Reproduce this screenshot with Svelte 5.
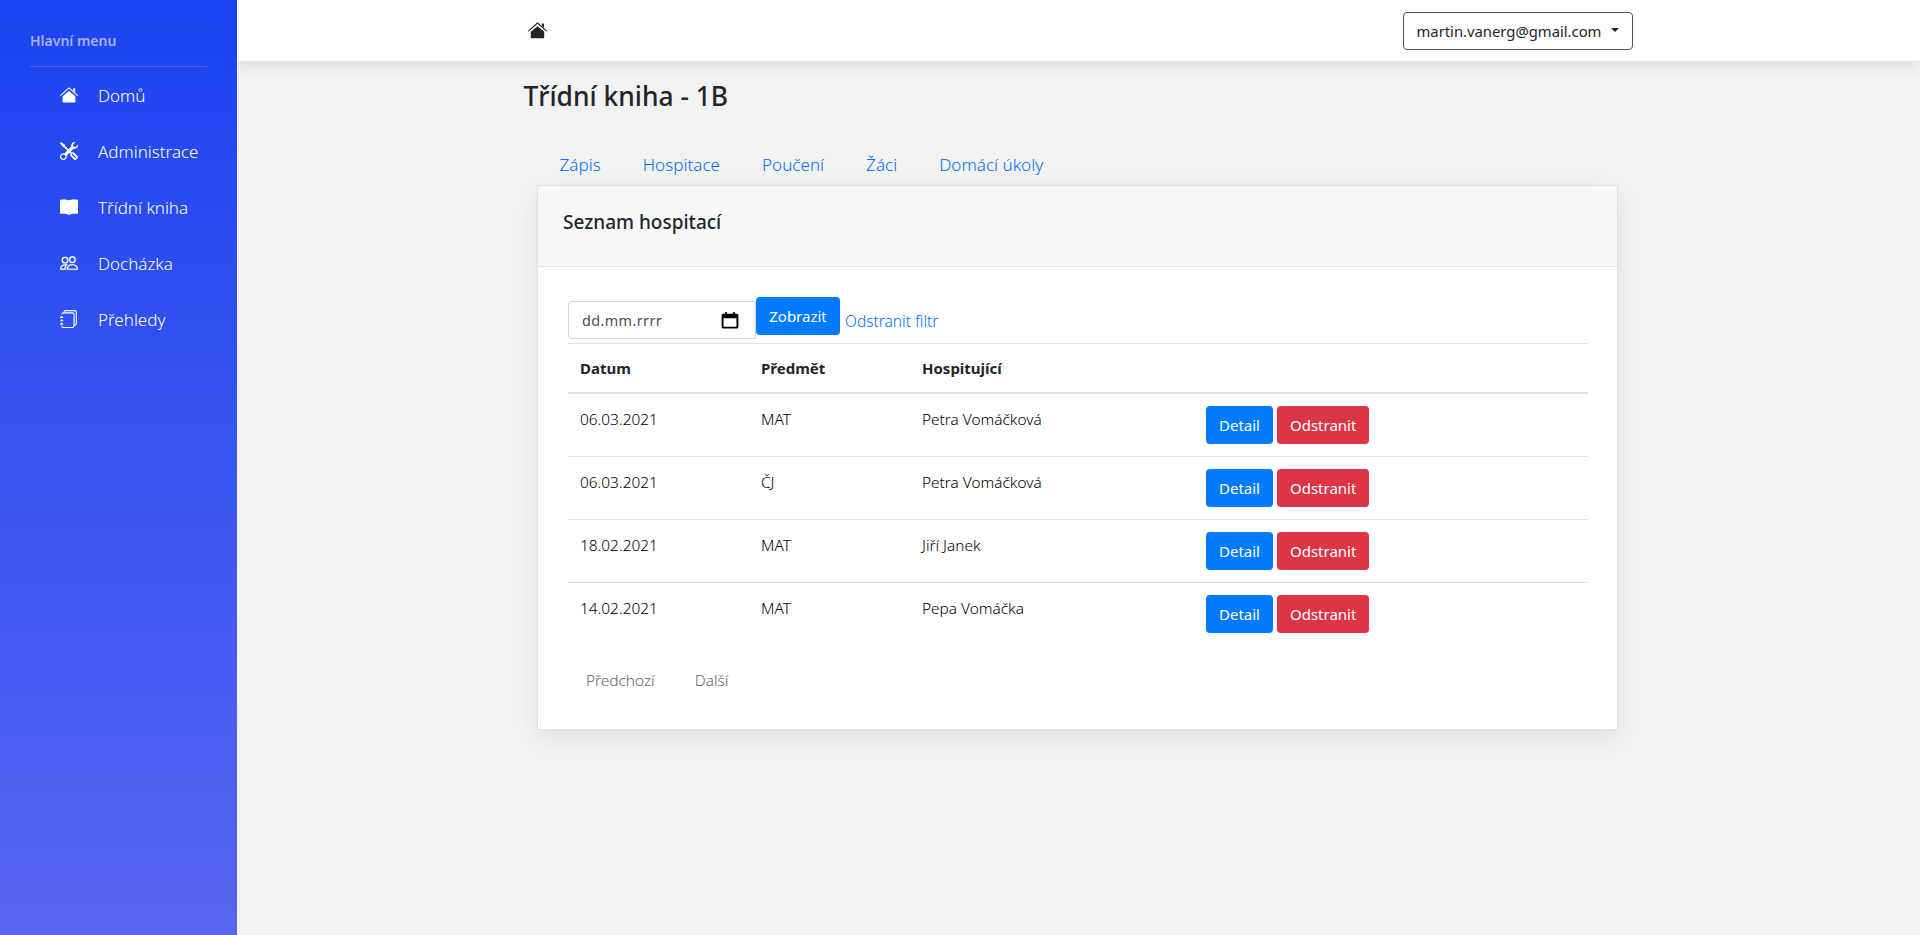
<script>
  const nav = [
    { label: 'Domů', icon: 'home' },
    { label: 'Administrace', icon: 'tools' },
    { label: 'Třídní kniha', icon: 'book' },
    { label: 'Docházka', icon: 'people' },
    { label: 'Přehledy', icon: 'journals' }
  ];
  const tabs = ['Zápis', 'Hospitace', 'Poučení', 'Žáci', 'Domácí úkoly'];
  const rows = [
    ['06.03.2021', 'MAT', 'Petra Vomáčková'],
    ['06.03.2021', 'ČJ', 'Petra Vomáčková'],
    ['18.02.2021', 'MAT', 'Jiří Janek'],
    ['14.02.2021', 'MAT', 'Pepa Vomáčka']
  ];
</script>

{#snippet homeIcon()}
  <svg viewBox="0 0 576 512" aria-hidden="true">
    <path fill="currentColor" d="M288 130 L84 296 V470 a24 24 0 0 0 24 24 H468 a24 24 0 0 0 24-24 V296 Z"/>
    <path fill="none" stroke="currentColor" stroke-width="34" stroke-linecap="round" stroke-linejoin="round" d="M22 268 L288 28 L554 268"/>
    <path fill="currentColor" d="M420 40 H486 V170 L420 110 Z"/>
  </svg>
{/snippet}

<div class="page">
  <aside class="sidebar">
    <div class="side-title">Hlavní menu</div>
    <hr class="side-rule" />
    <ul class="side-nav">
      {#each nav as item}
        <li class="side-item">
          <span class="side-icon">
            {#if item.icon === 'home'}
              {@render homeIcon()}
            {:else if item.icon === 'tools'}
              <svg viewBox="0 0 16 16" fill="currentColor" aria-hidden="true">
                <path d="M1 0 0 1l2.2 3.081a1 1 0 0 0 .815.419h.07a1 1 0 0 1 .708.293l2.675 2.675-2.617 2.654A3.003 3.003 0 0 0 0 13a3 3 0 1 0 5.878-.851l2.654-2.617.968.968-.305.914a1 1 0 0 0 .242 1.023l3.27 3.27a.997.997 0 0 0 1.414 0l1.586-1.586a.997.997 0 0 0 0-1.414l-3.27-3.27a1 1 0 0 0-1.023-.242L10.5 9.5l-.96-.96 2.68-2.643A3.005 3.005 0 0 0 16 3c0-.269-.035-.53-.102-.777l-2.14 2.141L12 4l-.364-1.757L13.777.102a3 3 0 0 0-3.675 3.68L7.462 6.46 4.793 3.793a1 1 0 0 1-.293-.707v-.071a1 1 0 0 0-.419-.814L1 0Zm9.646 10.646a.5.5 0 0 1 .708 0l2.914 2.915a.5.5 0 0 1-.707.707l-2.915-2.914a.5.5 0 0 1 0-.708ZM3 11l.471.242.529.026.287.445.445.287.026.529L5 13l-.242.471-.026.529-.445.287-.287.445-.529.026L3 15l-.471-.242L2 14.732l-.287-.445L1.268 14l-.026-.529L1 13l.242-.471.026-.529.445-.287.287-.445.529-.026L3 11Z"/>
              </svg>
            {:else if item.icon === 'book'}
              <svg viewBox="0 0 16 16" fill="currentColor" aria-hidden="true">
                <path d="M0 2.4 Q0 1.6 .8 1.5 C3.5 1.2 6.3 1.3 8 2 C9.7 1.3 12.5 1.2 15.2 1.5 Q16 1.6 16 2.4 V13.4 Q16 14 15.2 14 C12.5 13.8 9.8 14 8.6 14.9 H7.4 C6.2 14 3.5 13.8 .8 14 Q0 14 0 13.4 Z"/>
              </svg>
            {:else if item.icon === 'people'}
              <svg viewBox="0 0 16 16" fill="currentColor" stroke="currentColor" stroke-width="0.25" aria-hidden="true">
                <path d="M15 14s1 0 1-1-1-4-5-4-5 3-5 4 1 1 1 1h8Zm-7.978-1A.261.261 0 0 1 7 12.996c.001-.264.167-1.03.76-1.72C8.312 10.629 9.282 10 11 10c1.717 0 2.687.63 3.24 1.276.593.69.758 1.457.76 1.72l-.008.002a.274.274 0 0 1-.014.002H7.022ZM11 7a2 2 0 1 0 0-4 2 2 0 0 0 0 4Zm3-2a3 3 0 1 1-6 0 3 3 0 0 1 6 0ZM6.936 9.28a5.88 5.88 0 0 0-1.23-.247A7.35 7.35 0 0 0 5 9c-4 0-5 3-5 4 0 .667.333 1 1 1h4.216A2.238 2.238 0 0 1 5 13c0-1.01.377-2.042 1.09-2.904.243-.294.526-.569.846-.816ZM4.92 10A5.493 5.493 0 0 0 4 13H1c0-.26.164-1.03.76-1.724.545-.636 1.492-1.256 3.16-1.275ZM1.5 5.5a3 3 0 1 1 6 0 3 3 0 0 1-6 0Zm3-2a2 2 0 1 0 0 4 2 2 0 0 0 0-4Z"/>
              </svg>
            {:else}
              <svg viewBox="0 0 16 16" fill="currentColor" aria-hidden="true">
                <path d="M5 0h8a2 2 0 0 1 2 2v10a2 2 0 0 1-2 2 2 2 0 0 1-2 2H3a2 2 0 0 1-2-2h1a1 1 0 0 0 1 1h8a1 1 0 0 0 1-1V4a1 1 0 0 0-1-1H3a1 1 0 0 0-1 1H1a2 2 0 0 1 2-2h8a2 2 0 0 1 2 2v9a1 1 0 0 0 1-1V2a1 1 0 0 0-1-1H5a1 1 0 0 0-1 1H3a2 2 0 0 1 2-2z"/>
                <path d="M1 6v-.5a.5.5 0 0 1 1 0V6h.5a.5.5 0 0 1 0 1h-2a.5.5 0 0 1 0-1H1zm0 3v-.5a.5.5 0 0 1 1 0V9h.5a.5.5 0 0 1 0 1h-2a.5.5 0 0 1 0-1H1zm0 2.5v.5H.5a.5.5 0 0 0 0 1h2a.5.5 0 0 0 0-1H2v-.5a.5.5 0 0 0-1 0z"/>
              </svg>
            {/if}
          </span>
          <span class="side-label">{item.label}</span>
        </li>
      {/each}
    </ul>
  </aside>

  <div class="main">
    <header class="topbar">
      <div class="topbar-inner">
        <span class="top-home">{@render homeIcon()}</span>
        <button class="user-btn" type="button">martin.vanerg@gmail.com<span class="caret"></span></button>
      </div>
    </header>

    <div class="container">
      <h1 class="title">Třídní kniha - 1B</h1>
      <nav class="tabs">
        {#each tabs as tab}<span class="tab">{tab}</span>{/each}
      </nav>
      <section class="card">
        <div class="card-header">Seznam hospitací</div>
        <div class="card-body">
          <div class="filter">
            <div class="date-input">
              <span>dd.mm.rrrr</span>
              <svg viewBox="0 0 16 16" class="cal" aria-hidden="true">
                <path fill="none" stroke="#000" stroke-width="1.7" d="M1.9 3.2 H14.1 Q14.6 3.2 14.6 3.8 V14 Q14.6 14.8 13.8 14.8 H2.2 Q1.4 14.8 1.4 14 V3.8 Q1.4 3.2 1.9 3.2 Z"/>
                <path fill="#000" d="M1.4 3.2 H14.6 V6.4 H1.4 Z M3.6 1 H5.4 V3.4 H3.6 Z M10.6 1 H12.4 V3.4 H10.6 Z"/>
              </svg>
            </div>
            <button class="btn primary show" type="button">Zobrazit</button>
            <span class="clear">Odstranit filtr</span>
          </div>
          <table>
            <thead>
              <tr><th class="c1">Datum</th><th class="c2">Předmět</th><th class="c3">Hospitující</th><th></th></tr>
            </thead>
            <tbody>
              {#each rows as r}
                <tr>
                  <td>{r[0]}</td><td>{r[1]}</td><td>{r[2]}</td>
                  <td class="actions"><button class="btn primary" type="button">Detail</button><button class="btn danger" type="button">Odstranit</button></td>
                </tr>
              {/each}
            </tbody>
          </table>
          <div class="pager"><span>Předchozí</span><span>Další</span></div>
        </div>
      </section>
    </div>
  </div>
</div>

<style>
  :global(body) {
    margin: 0;
    background: #f2f2f2;
    font-family: "Noto Sans", "Open Sans", sans-serif;
    color: #212529;
  }
  .page { display: flex; min-height: 935px; }
  .sidebar {
    width: 237px;
    flex: none;
    box-sizing: border-box;
    padding: 31px 30px 0;
    color: #fff;
    background: linear-gradient(180deg, #1c44f2 0%, #5866f0 100%);
  }
  .side-title { font-size: 14px; line-height: 20px; font-weight: 600; color: #a6b1fa; }
  .side-rule { border: 0; border-top: 1px solid rgba(255, 255, 255, 0.15); margin: 15px 0 0; width: 177px; }
  .side-nav { list-style: none; margin: 0; padding: 0; }
  .side-item { display: flex; align-items: center; height: 56px; }
  .side-icon { width: 18px; height: 18px; margin-left: 30px; margin-right: 20px; display: block; }
  .side-icon svg { width: 18px; height: 18px; display: block; }
  .side-label { font-size: 17px; font-weight: 300; }
  .main { flex: 1; min-width: 0; }
  .topbar {
    height: 61px;
    background: #fff;
    box-shadow: 0 4px 14px rgba(0, 0, 0, 0.1);
    position: relative;
  }
  .topbar-inner {
    width: 1140px;
    margin: 0 auto;
    padding: 0 15px;
    box-sizing: border-box;
    height: 61px;
    display: flex;
    align-items: center;
    justify-content: space-between;
  }
  .top-home { width: 19px; height: 19px; margin-left: 4px; color: #212529; display: block; }
  .top-home svg { width: 19px; height: 19px; display: block; }
  .user-btn {
    font: inherit;
    font-size: 14.8px;
    height: 38px;
    width: 230px;
    margin-right: 0.5px;
    padding: 0;
    background: #fff;
    border: 1px solid #555;
    border-radius: 4px;
    color: #212529;
    display: flex;
    align-items: center;
    justify-content: center;
  }
  .caret {
    margin-left: 10px;
    margin-bottom: 2px;
    border-top: 4.8px solid #212529;
    border-left: 4.8px solid transparent;
    border-right: 4.8px solid transparent;
  }
  .container { width: 1140px; margin: 0 auto; padding: 0 15px; box-sizing: border-box; }
  .title { font-size: 26.4px; font-weight: 500; line-height: 36px; margin: 17px 0 0; }
  .tabs { display: flex; padding-left: 15px; margin-top: 29px; height: 42px; align-items: center; }
  .tab { color: #0070f5; font-size: 17.1px; font-weight: 300; padding: 0 21px; }
  .card {
    margin: 0 16px 0 13.5px;
    background: #fff;
    border: 1px solid #dee2e6;
    box-shadow: 0 8px 24px rgba(0, 0, 0, 0.08);
    box-sizing: border-box;
    height: 545px;
  }
  .card-header {
    height: 81px;
    background: #f7f8fa;
    border-bottom: 1px solid #dee2e6;
    box-sizing: border-box;
    padding: 0 0 9px 25px;
    display: flex;
    align-items: center;
    font-size: 19px;
    font-weight: 500;
  }
  .card-body { padding: 30px 28.5px 0 30px; }
  .filter { display: flex; align-items: flex-start; height: 46px; }
  .date-input {
    margin-top: 4px;
    width: 188px;
    flex: none;
    height: 38px;
    box-sizing: border-box;
    border: 1px solid #ced4da;
    border-radius: 4px 0 0 4px;
    padding: 0 16px 0 13px;
    display: flex;
    align-items: center;
    justify-content: space-between;
    color: #495057;
    font-size: 14.4px;
    letter-spacing: 0.4px;
  }
  .cal { width: 18px; height: 18px; }
  .btn {
    font: inherit;
    font-size: 15px;
    font-weight: 400;
    height: 38px;
    padding: 0 13px;
    border: 0;
    border-radius: 4px;
    color: #fff;
  }
  .primary { background: #007bff; }
  .danger { background: #dc3545; margin-left: 4px; }
  .show { width: 84px; padding: 0; flex: none; }
  .clear { color: #0070f5; font-size: 15.5px; font-weight: 300; margin: 14px 0 0 5px; line-height: 20px; }
  table { width: 100%; table-layout: fixed; border-collapse: collapse; font-size: 15px; }
  th { text-align: left; font-weight: 700; padding: 1px 12px 0; height: 49px; box-sizing: border-box; border-top: 1px solid #dee2e6; border-bottom: 2px solid #dee2e6; }
  td { vertical-align: top; padding: 15px 12px 9px; border-bottom: 1px solid #dee2e6; line-height: 22px; height: 38px; font-size: 15.4px; font-weight: 300; color: #000; }
  tbody tr:last-child td { border-bottom: 0; }
  .c1 { width: 181px; }
  .c2 { width: 161px; }
  .c3 { width: 284px; }
  td.actions { padding: 12px 12px; white-space: nowrap; }
  td.actions .btn { vertical-align: top; }
  .pager { display: flex; margin-top: 25px; padding-left: 18px; gap: 40px; color: #5c656d; font-size: 15.4px; font-weight: 300; line-height: 22px; }
</style>
